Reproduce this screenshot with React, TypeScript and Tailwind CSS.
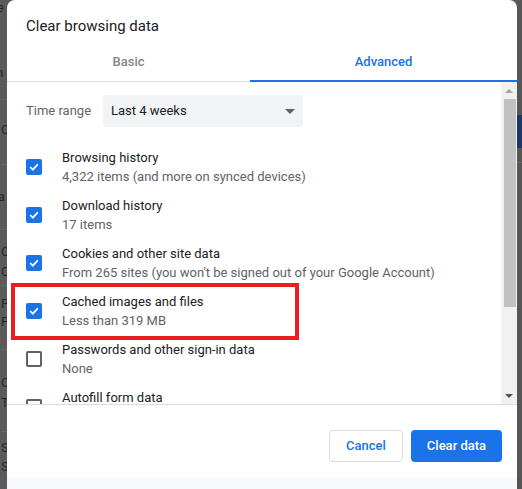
import React from 'react';

type Item = {
  title: string;
  detail: string;
  checked: boolean;
  highlight?: boolean;
};

const items: Item[] = [
  { title: 'Browsing history', detail: '4,322 items (and more on synced devices)', checked: true },
  { title: 'Download history', detail: '17 items', checked: true },
  {
    title: 'Cookies and other site data',
    detail: "From 265 sites (you won't be signed out of your Google Account)",
    checked: true,
  },
  { title: 'Cached images and files', detail: 'Less than 319 MB', checked: true, highlight: true },
  { title: 'Passwords and other sign-in data', detail: 'None', checked: false },
  { title: 'Autofill form data', detail: '12 suggestions (synced)', checked: false },
];

function Checkbox({ checked }: { checked: boolean }) {
  if (checked) {
    return (
      <div className="w-[16px] h-[16px] rounded-[2px] bg-[#1a73e8] flex items-center justify-center shrink-0">
        <svg width="12" height="12" viewBox="0 0 12 12">
          <path d="M2.2 6.2 L4.8 8.7 L9.8 3.4" fill="none" stroke="#fff" strokeWidth="1.8" />
        </svg>
      </div>
    );
  }
  return <div className="w-[16px] h-[16px] rounded-[2px] border-2 border-[#5f6368] shrink-0" />;
}

// the page behind the dialog, seen only as a thin strip
function BackdropLeft() {
  return (
    <div className="w-[7px] shrink-0 bg-[#5b5b5b] overflow-hidden text-[13px] leading-[16px] text-[#262626] flex flex-col">
      <div className="h-[100px] border-b border-[#666] -ml-[3px]">
        <div>e</div>
        <div className="mt-[49px] -ml-[1px]">n</div>
      </div>
      <div className="h-[65px] border-b border-[#666] pt-[22px] ml-[1px]">C</div>
      <div className="h-[65px] border-b border-[#666] pt-[24px] -ml-[2px]">a</div>
      <div className="h-[56px] border-b border-[#666] pt-[14px] ml-[1px]">
        <div>C</div>
        <div className="mt-[4px]">C</div>
      </div>
      <div className="h-[64px] border-b border-[#666] pt-[10px] ml-[1px]">
        <div>F</div>
        <div className="mt-[2px]">F</div>
      </div>
      <div className="h-[82px] border-b border-[#666] pt-[25px] ml-[1px]">
        <div>C</div>
        <div className="mt-[4px]">T</div>
      </div>
      <div className="pt-[8px] ml-[1px]">
        <div>S</div>
        <div className="mt-[3px]">S</div>
      </div>
    </div>
  );
}

function BackdropRight() {
  return (
    <div className="flex-1 bg-[#565656] flex flex-col">
      <div className="h-[115px]" />
      <div className="h-[33px] bg-[#1b3767]" />
      <div className="h-[15px] border-b border-[#666]" />
    </div>
  );
}

export default function App() {
  return (
    <div
      className="w-[522px] h-[489px] overflow-hidden flex bg-[#5b5b5b]"
      style={{ fontFamily: 'Roboto, "Noto Sans", sans-serif' }}
    >
      <BackdropLeft />

      <div className="w-[510px] shrink-0 flex flex-col bg-white rounded-t-[8px] overflow-hidden">
        {/* Header */}
        <div className="pt-[16px] pb-[4px] pl-[19px] text-[15px] leading-[20px] text-[#202124]">
          Clear browsing data
        </div>

        {/* Tabs */}
        <div className="flex border-b border-[#dadce0]">
          <div className="w-[243px] h-[42px] -mb-px flex items-center justify-center text-[13px] font-medium text-[#80868b] pt-[2px]">
            Basic
          </div>
          <div className="flex-1 h-[42px] -mb-px flex items-center justify-center text-[13px] font-medium text-[#1a73e8] border-b-2 border-[#1a73e8] pt-[4px]">
            Advanced
          </div>
        </div>

        {/* Scrollable body */}
        <div className="h-[323px] flex border-b border-[#dadce0]">
          <div className="flex-1 overflow-hidden pl-[19px]">
            <div className="flex items-center mt-[13px] h-[32px]">
              <span className="text-[13px] text-[#5f6368] w-[77px]">Time range</span>
              <div className="w-[200px] h-[32px] rounded-[4px] bg-[#f1f3f4] flex items-center justify-between pl-[8px] pr-[8px]">
                <span className="text-[13px] text-[#202124]">Last 4 weeks</span>
                <svg width="10" height="5" viewBox="0 0 10 5">
                  <path d="M0 0 H10 L5 5 Z" fill="#5f6368" />
                </svg>
              </div>
            </div>

            <div className="mt-[16px] flex flex-col">
              {items.map((item) => (
                <div key={item.title} className="relative h-[48px] flex items-center gap-[20px]">
                  {item.highlight && (
                    <div className="absolute -top-[4px] -left-[15px] w-[288px] h-[57px] border-[4px] border-[#ed1c24]" />
                  )}
                  <Checkbox checked={item.checked} />
                  <div className="flex flex-col text-[13px] leading-[19px]">
                    <span className="text-[#202124] whitespace-nowrap">{item.title}</span>
                    <span className="text-[#5f6368] whitespace-nowrap">{item.detail}</span>
                  </div>
                </div>
              ))}
            </div>
          </div>

          {/* Scrollbar */}
          <div className="w-[16px] shrink-0 bg-[#f1f1f1] flex flex-col items-center">
            <div className="h-[17px] flex items-center justify-center">
              <svg width="8" height="4" viewBox="0 0 8 4">
                <path d="M0 4 L4 0 L8 4 Z" fill="#a3a3a3" />
              </svg>
            </div>
            <div className="w-[12px] h-[208px] bg-[#c1c1c1] ml-[1px]" />
            <div className="flex-1" />
            <div className="h-[17px] flex items-center justify-center">
              <svg width="8" height="4" viewBox="0 0 8 4">
                <path d="M0 0 H8 L4 4 Z" fill="#505050" />
              </svg>
            </div>
          </div>
        </div>

        {/* Footer */}
        <div className="h-[72px] flex justify-end items-start gap-[8px] pt-[25px] pr-[15px]">
          <button className="w-[74px] h-[32px] rounded-[4px] border border-[#dadce0] bg-white text-[13px] font-medium text-[#1a73e8]">
            Cancel
          </button>
          <button className="w-[91px] h-[32px] rounded-[4px] bg-[#1a73e8] text-[13px] font-medium text-white">
            Clear data
          </button>
        </div>
        <div className="flex-1 bg-[#f8f9fa]" />
      </div>

      <BackdropRight />
    </div>
  );
}
